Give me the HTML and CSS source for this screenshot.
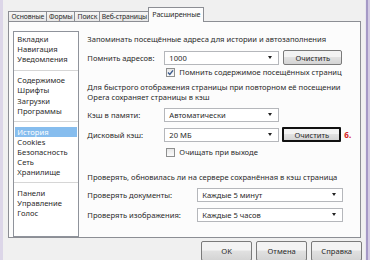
FILE: index.html
```html
<!DOCTYPE html>
<html lang="ru">
<head>
<meta charset="utf-8">
<link rel="stylesheet" href="styles.css">
</head>
<body>
<div class="window">
  <div class="frame frame-left"></div>
  <div class="dialog">
    <div class="tabs">
      <div class="tab t1">Основные</div>
      <div class="tab t2">Формы</div>
      <div class="tab t3">Поиск</div>
      <div class="tab t4">Веб-страницы</div>
      <div class="tab t5 active">Расширенные</div>
    </div>
    <div class="panel">
      <ul class="list">
        <li>Вкладки</li>
        <li>Навигация</li>
        <li>Уведомления</li>
        <li class="sep"></li>
        <li>Содержимое</li>
        <li>Шрифты</li>
        <li>Загрузки</li>
        <li>Программы</li>
        <li class="sep"></li>
        <li class="selected">История</li>
        <li>Cookies</li>
        <li>Безопасность</li>
        <li>Сеть</li>
        <li>Хранилище</li>
        <li class="sep"></li>
        <li>Панели</li>
        <li>Управление</li>
        <li>Голос</li>
      </ul>
      <div class="content">
        <div class="text r-head">Запоминать посещённые адреса для истории и автозаполнения</div>
        <div class="row r-addr">
          <span class="label">Помнить адресов:</span>
          <div class="select s-short"><span>1000</span><i class="arrow"></i></div>
          <div class="btn">Очистить</div>
        </div>
        <div class="check-row r-check1">
          <span class="checkbox checked"><svg viewBox="0 0 9 9" width="9" height="9"><path d="M2 4.6 L3.8 6.4 L7 2.4" fill="none" stroke="#3b5a8c" stroke-width="1.4"/></svg></span>
          <span>Помнить содержимое посещённых страниц</span>
        </div>
        <div class="text r-para">Для быстрого отображения страницы при повторном её посещении<br>Opera сохраняет страницы в кэш</div>
        <div class="row r-mem">
          <span class="label">Кэш в памяти:</span>
          <div class="select s-short"><span>Автоматически</span><i class="arrow"></i></div>
        </div>
        <div class="row r-disk">
          <span class="label">Дисковый кэш:</span>
          <div class="select s-short"><span>20 МБ</span><i class="arrow"></i></div>
          <div class="btn btn-marked">Очистить</div>
          <span class="mark">6.</span>
        </div>
        <div class="check-row r-check2">
          <span class="checkbox"></span>
          <span>Очищать при выходе</span>
        </div>
        <div class="text r-check-head">Проверять, обновилась ли на сервере сохранённая в кэш страница</div>
        <div class="row r-docs">
          <span class="label label-wide">Проверять документы:</span>
          <div class="select s-long"><span>Каждые 5 минут</span><i class="arrow"></i></div>
        </div>
        <div class="row r-imgs">
          <span class="label label-wide">Проверять изображения:</span>
          <div class="select s-long"><span>Каждые 5 часов</span><i class="arrow"></i></div>
        </div>
      </div>
    </div>
    <div class="buttons">
      <div class="btn dbtn">OK</div>
      <div class="btn dbtn">Отмена</div>
      <div class="btn dbtn">Справка</div>
    </div>
  </div>
  <div class="frame frame-right"></div>
</div>
</body>
</html>
```

FILE: styles.css
```css
* { box-sizing: border-box; }
html, body { margin: 0; padding: 0; }
body {
  width: 370px;
  height: 260px;
  overflow: hidden;
  background: #f0f0f0;
  font-family: "Noto Sans", "Open Sans", sans-serif;
  font-size: 7.6px;
  color: #2a2a2a;
}
.window { display: flex; height: 260px; }
.frame-left {
  width: 7px;
  background: linear-gradient(to right, #dcd6e8 0 3px, #a599c6 3px 5px, #d7d0e6 5px 6px, #ece9f1 6px);
}
.frame-right {
  width: 10px;
  background: linear-gradient(to right, #e9e6ef 0 1px, #a599c6 1px 3px, #d3cbe3 3px);
}
.dialog {
  flex: 1;
  display: flex;
  flex-direction: column;
  padding: 7px 4px 0 5px;
}
.tabs { display: flex; align-items: flex-end; height: 14px; position: relative; z-index: 2; }
.tab {
  height: 10px;
  line-height: 9px;
  font-size: 6.8px;
  letter-spacing: -0.1px;
  text-align: center;
  border: 1px solid #8c8e94;
  border-bottom: none;
  margin-right: -1px;
  background: linear-gradient(#f6f6f6, #e7e7e7);
  white-space: nowrap;
  overflow: hidden;
}
.t1 { width: 39px; }
.t2 { width: 29px; }
.t3 { width: 26px; }
.t4 { width: 50px; }
.t5 { width: 56px; }
.tab.active {
  height: 15px;
  margin-bottom: -1px;
  background: #fcfcfc;
  line-height: 12px;
  font-size: 7.2px;
}
.panel {
  height: 227px;
  border: 1px solid #8c8e94;
  background: #fcfcfc;
  display: flex;
  padding: 9px 9px 0 4px;
}
.list {
  width: 66px;
  height: 206px;
  margin: 0;
  padding: 2px 1px 0;
  list-style: none;
  border: 1px solid #8f939b;
  background: #fff;
}
.list li {
  height: 10.2px;
  line-height: 10.2px;
  padding-left: 2px;
  white-space: nowrap;
}
.list li.sep {
  height: 10.6px;
  position: relative;
}
.list li.sep::after {
  content: "";
  position: absolute;
  left: -1px;
  right: -1px;
  top: 5px;
  border-top: 1px solid #d6d6d6;
}
.list li.selected { background: #86bdee; color: #fff; }
.content {
  flex: 1;
  margin-left: 8px;
  display: flex;
  flex-direction: column;
  padding-top: 3px;
}
.text { line-height: 10px; white-space: nowrap; }
.row { display: flex; align-items: center; height: 15px; }
.label { width: 77px; white-space: nowrap; }
.label-wide { width: 110px; }
.select {
  height: 14px;
  border: 1px solid #b5b7bb;
  background: #fff;
  display: flex;
  align-items: center;
  justify-content: space-between;
  padding: 0 6px 0 4px;
}
.s-short { width: 115px; }
.s-long { width: 146px; }
.arrow {
  width: 0; height: 0;
  border-left: 2.5px solid transparent;
  border-right: 2.5px solid transparent;
  border-top: 3px solid #222;
}
.btn {
  height: 15px;
  width: 59px;
  margin-left: 4px;
  border: 1px solid #7a7a7a;
  border-radius: 2px;
  background: linear-gradient(#f3f3f3 0 45%, #e1e1e1 50%, #d4d4d4);
  display: flex;
  align-items: center;
  justify-content: center;
  white-space: nowrap;
}
.btn-marked { border: 2px solid #111; border-radius: 1px; margin-left: 3px; }
.mark { color: #d42020; font-weight: bold; margin-left: 3px; font-size: 8px; }
.check-row { display: flex; align-items: center; height: 10px; padding-left: 79px; }
.checkbox {
  width: 9px; height: 9px;
  border: 1px solid #8e8f8f;
  background: linear-gradient(#e8e8e8, #fbfbfb);
  margin-right: 4px;
  display: flex;
}
.checkbox svg { margin: -1px; }
.r-addr { margin-top: 6px; }
.r-check1 { margin-top: 2px; }
.r-para { margin-top: 5px; }
.r-mem { margin-top: 5px; }
.r-disk { margin-top: 5px; }
.r-check2 { margin-top: 5px; }
.r-check-head { margin-top: 15px; }
.r-docs { margin-top: 5px; }
.r-imgs { margin-top: 5px; }
.buttons {
  display: flex;
  justify-content: flex-end;
  margin-top: 3px;
  margin-right: -1px;
}
.dbtn { width: 51px; height: 20px; margin-left: 4px; }
```
